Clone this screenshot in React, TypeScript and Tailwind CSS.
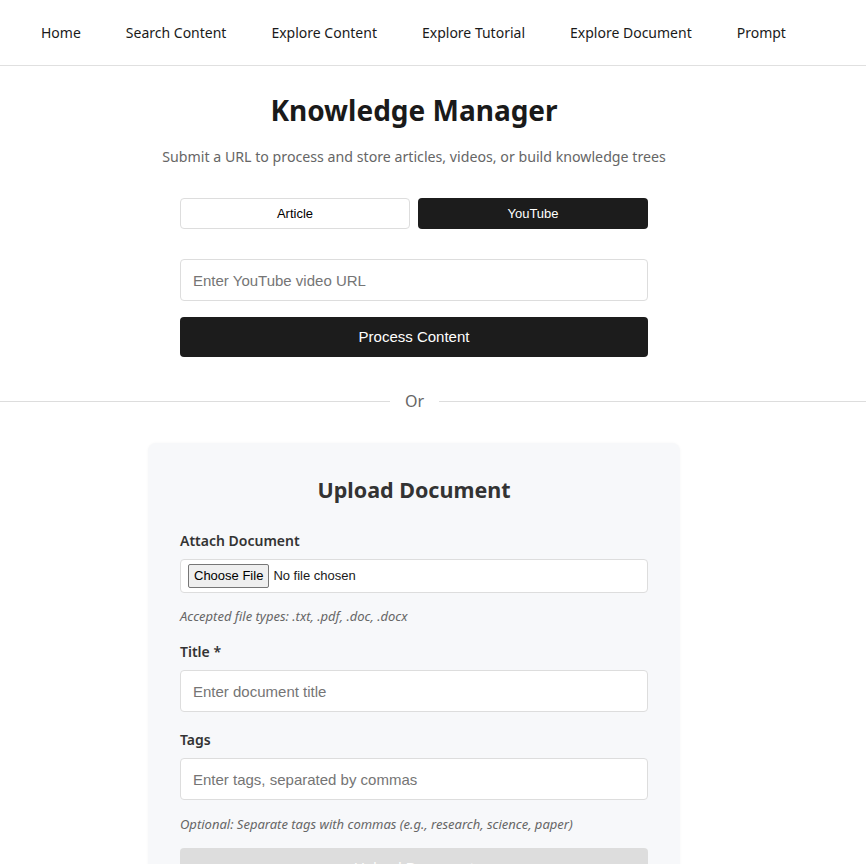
import { useState } from "react"

const navLinks = ["Home", "Search Content", "Explore Content", "Explore Tutorial", "Explore Document", "Prompt"]

const inputCls =
  "w-full h-[42px] rounded border border-[#ddd] bg-white px-3 text-[15px] font-['Liberation_Sans',Arial,sans-serif] placeholder:text-[#757575] outline-none"

const labelCls = "block text-[14px] leading-[22px] font-semibold text-[#333]"

export default function App() {
  const [mode, setMode] = useState<"article" | "youtube">("youtube")

  const tabCls = (active: boolean) =>
    active
      ? "h-[31px] rounded bg-[#1c1c1c] text-white text-[13px]"
      : "h-[31px] rounded border border-[#ddd] bg-white text-black text-[13px]"

  return (
    <div className="min-h-screen bg-white font-['Noto_Sans',sans-serif] text-[#1a1a1a]">
      <nav className="h-[66px] border-b border-[#e0e0e0] flex items-center pl-[41px] gap-[45px] text-[14px]">
        {navLinks.map((l) => (
          <a key={l} href="#" className="text-[#1a1a1a] whitespace-nowrap">
            {l}
          </a>
        ))}
      </nav>

      <main className="flex flex-col items-center pr-[38px]">
        <h1 className="mt-[26px] text-[28px] leading-[36px] font-bold text-[#1a1a1a]">Knowledge Manager</h1>
        <p className="mt-[18px] text-[14.2px] leading-[22px] text-[#666]">
          Submit a URL to process and store articles, videos, or build knowledge trees
        </p>

        <div className="w-[468px] mt-[30px] font-['Liberation_Sans',Arial,sans-serif]">
          <div className="grid grid-cols-2 gap-2">
            <button onClick={() => setMode("article")} className={tabCls(mode === "article")}>
              Article
            </button>
            <button onClick={() => setMode("youtube")} className={tabCls(mode === "youtube")}>
              YouTube
            </button>
          </div>

          <input
            type="text"
            placeholder={mode === "youtube" ? "Enter YouTube video URL" : "Enter article URL"}
            className={"mt-[30px] " + inputCls}
          />
          <button className="mt-4 w-full h-10 rounded bg-[#1c1c1c] text-white text-[15px]">Process Content</button>
        </div>

        <div className="w-[calc(100%+38px)] -mr-[38px] mt-8 flex items-center text-base leading-6 text-[#666]">
          <div className="w-[390px] h-px bg-[#ddd]" />
          <span className="px-[15px]">Or</span>
          <div className="flex-1 h-px bg-[#ddd]" />
        </div>

        <section className="mt-[30px] w-[532px] rounded-lg bg-[#f7f8fa] shadow-[0_0_3px_rgba(0,0,0,0.04)] px-8 pt-8 pb-10">
          <h2 className="text-center text-[21.5px] leading-[30px] font-bold text-[#333]">Upload Document</h2>

          <label className={"mt-[25px] " + labelCls}>Attach Document</label>
          <div className="mt-[7px] h-[34px] rounded border border-[#ddd] bg-white flex items-center px-[7px]">
            <input
              type="file"
              className="text-[13px] font-['Liberation_Sans',Arial,sans-serif] text-[#1a1a1a] file:mr-1 file:border file:border-[#767676] file:bg-[#efefef] file:rounded-[2px] file:px-[5px] file:py-[1px] file:text-black"
            />
          </div>
          <p className="mt-[14px] text-[13px] leading-[18px] italic text-[#666]">
            Accepted file types: .txt, .pdf, .doc, .docx
          </p>

          <label className={"mt-[16px] " + labelCls}>Title *</label>
          <input type="text" placeholder="Enter document title" className={"mt-[7px] " + inputCls} />

          <label className={"mt-[17px] " + labelCls}>Tags</label>
          <input type="text" placeholder="Enter tags, separated by commas" className={"mt-[7px] " + inputCls} />
          <p className="mt-[15px] text-[13px] leading-[18px] italic text-[#666]">
            Optional: Separate tags with commas (e.g., research, science, paper)
          </p>

          <button
            disabled
            className="mt-[15px] w-full h-10 rounded bg-[#ddd] text-white text-[15px] font-['Liberation_Sans',Arial,sans-serif]"
          >
            Upload Document
          </button>
        </section>
      </main>
    </div>
  )
}
